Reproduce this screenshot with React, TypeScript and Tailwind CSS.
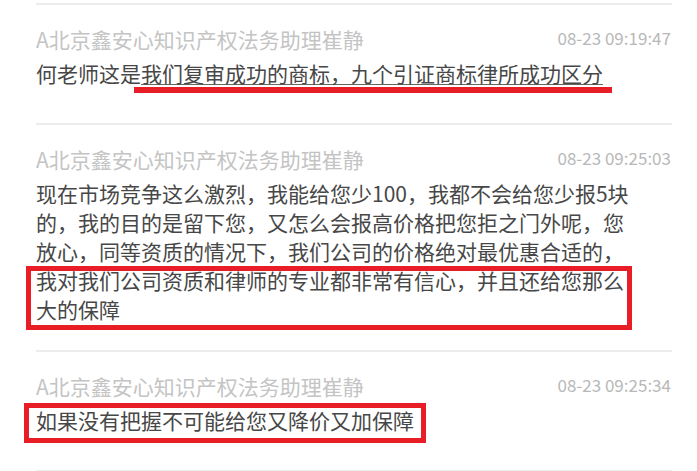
import { ReactNode } from "react"

type Message = {
  sender: string
  time: string
  body: ReactNode
  bottom: string
}

// red marker frame drawn over a run of text
function Frame({ className }: { className: string }) {
  return <span className={`pointer-events-none absolute border-[5px] border-[#e81d25] ${className}`} />
}

const SENDER = "A北京鑫安心知识产权法务助理崔静"

const messages: Message[] = [
  {
    sender: SENDER,
    time: "08-23 09:19:47",
    bottom: "pb-[35px]",
    body: (
      <>
        何老师这是
        <span className="relative inline-block leading-[29px] underline decoration-[#666] decoration-1 underline-offset-[2px]">
          我们复审成功的商标，九个引证商标律所成功区分
          <span className="absolute left-[-7px] right-[-9px] top-[28px] h-[6px] bg-[#e81d25]" />
        </span>
      </>
    ),
  },
  {
    sender: SENDER,
    time: "08-23 09:25:03",
    bottom: "pb-[26px]",
    body: (
      <>
        现在市场竞争这么激烈，我能给您少100，我都不会给您少报5块的，我的目的是留下您，又怎么会报高价格把您拒之门外呢，您放心，同等资质的情况下，我们公司的价格绝对最优惠合适的，
        <span className="relative block">
          我对我们公司资质和律师的专业都非常有信心，并且还给您那么大的保障
          <Frame className="left-[-10px] top-0 bottom-[-6px] w-[606px]" />
        </span>
      </>
    ),
  },
  {
    sender: SENDER,
    time: "08-23 09:25:34",
    bottom: "pb-[35px]",
    body: (
      <span className="relative inline-block leading-[29px]">
        如果没有把握不可能给您又降价又加保障
        <Frame className="left-[-12px] right-[-12px] top-[-3px] bottom-[-8px]" />
      </span>
    ),
  },
]

export default function App() {
  return (
    <div className="min-h-screen bg-white pl-[36px] pt-[3px] font-['Noto_Sans_CJK_SC','Microsoft_YaHei',sans-serif]">
      <div className="w-[636px]">
        {messages.map((m) => (
          <div key={m.time} className={`border-t-2 border-[#ececec] pt-[20px] ${m.bottom}`}>
            <div className="flex items-start justify-between">
              <span className="text-[21px] leading-[29px] text-[#c4c4c4]">{m.sender}</span>
              <span className="pr-[1px] text-[17px] leading-[26px] text-[#b8b8b8]">{m.time}</span>
            </div>
            <div className="mt-[5px] w-[602px] text-[21px] leading-[29px] text-[#474747]">{m.body}</div>
          </div>
        ))}
        <div className="border-t-2 border-[#ececec]" />
      </div>
    </div>
  )
}
